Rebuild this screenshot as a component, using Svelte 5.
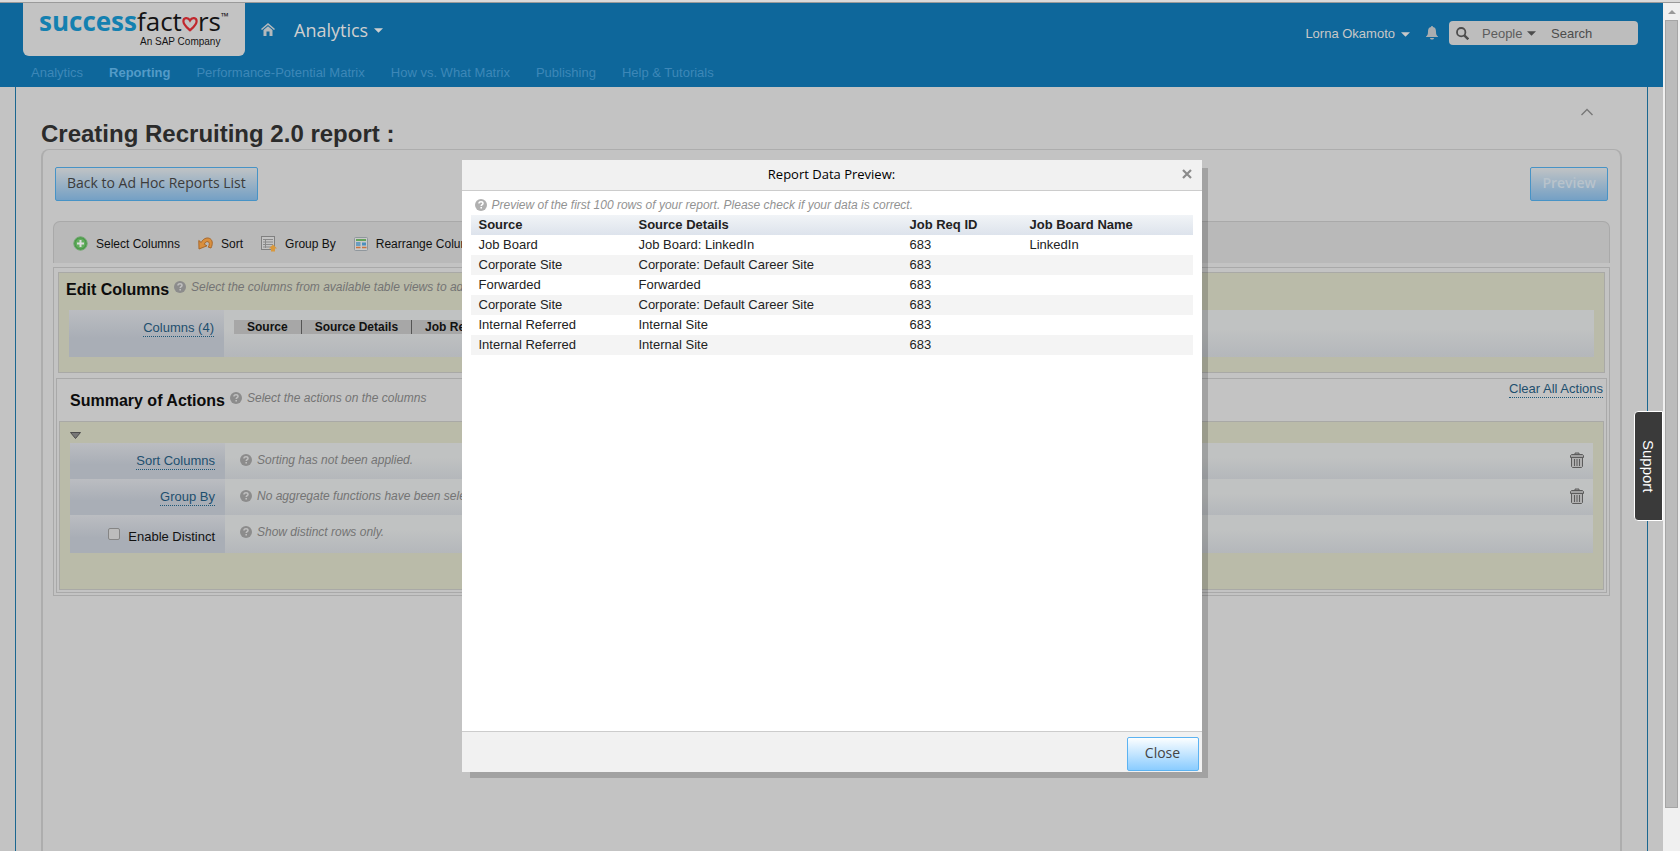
<script lang="ts">
  type Row = { source: string; details: string; req: string; board: string };

  const navItems = [
    'Analytics',
    'Reporting',
    'Performance-Potential Matrix',
    'How vs. What Matrix',
    'Publishing',
    'Help & Tutorials',
  ];
  const activeNav = 'Reporting';

  const columns = ['Source', 'Source Details', 'Job Req ID', 'Job Board Name'];

  const rows: Row[] = [
    { source: 'Job Board', details: 'Job Board: LinkedIn', req: '683', board: 'LinkedIn' },
    { source: 'Corporate Site', details: 'Corporate: Default Career Site', req: '683', board: '' },
    { source: 'Forwarded', details: 'Forwarded', req: '683', board: '' },
    { source: 'Corporate Site', details: 'Corporate: Default Career Site', req: '683', board: '' },
    { source: 'Internal Referred', details: 'Internal Site', req: '683', board: '' },
    { source: 'Internal Referred', details: 'Internal Site', req: '683', board: '' },
  ];

  let distinct = $state(false);
  let previewOpen = $state(true);
  let query = $state('');
</script>

{#snippet hint(text: string)}
  <span class="hint">
    <svg width="12" height="12" viewBox="0 0 12 12" aria-hidden="true">
      <circle cx="6" cy="6" r="6" fill="currentColor" />
      <path d="M4 4.6C4 3.3 4.9 2.7 6 2.7s2 .7 2 1.7c0 1.3-1.8 1.3-1.8 2.7" fill="none" stroke="var(--mark)" stroke-width="1.5" />
      <rect x="5.4" y="8" width="1.6" height="1.5" fill="var(--mark)" />
    </svg>
    <em>{text}</em>
  </span>
{/snippet}

{#snippet caret()}
  <svg class="caret" width="9" height="5" viewBox="0 0 10 5" aria-hidden="true">
    <path d="M0 0h10L5 5z" fill="currentColor" />
  </svg>
{/snippet}

{#snippet trash()}
  <button class="icon-btn" aria-label="Delete">
    <svg width="14" height="16" viewBox="0 0 14 16" fill="none" stroke="#5c5c5c">
      <path d="M5 2.5V1h4v1.5M.5 5.5v-2l1-1h11l1 1v2z" fill="#a2a2a2" />
      <path d="M1.500 6v8.500l1 1h9l1-1V6" fill="#b0b0b0" />
      <path d="M4.500 7v7M7 7v7M9.500 7v7" />
    </svg>
  </button>
{/snippet}

<div class="window">
  <div class="page">
    <header>
      <div class="top-row">
        <a class="logo" href="#home" aria-label="SuccessFactors">
          <span class="logo-word">
            <b>success</b><span>fact</span><svg width="16" height="16" viewBox="0 0 16 16" aria-hidden="true">
              <path
                d="M8 14.3C5 11.500 1.400 8.800 1.400 5.200 1.400 1.600 6 .8 8 4.500c2-3.700 6.600-2.900 6.600.7 0 3.600-3.600 6.300-6.600 9.100z"
                fill="none"
                stroke="#c1272d"
                stroke-width="2.2"
              />
            </svg><span>rs</span><sup>™</sup>
          </span>
          <span class="logo-tag">An SAP Company</span>
        </a>
        <a class="home" href="#home" aria-label="Home">
          <svg width="14" height="13" viewBox="0 0 14 13">
            <path d="M7 0l7 6-1 1-6-5-6 5-1-1z" fill="#b4b9bc" />
            <path d="M2.500 7L7 3.300 11.500 7v6H8.500V8.500h-3V13h-3z" fill="#b4b9bc" />
          </svg>
        </a>
        <button class="module">Analytics {@render caret()}</button>

        <div class="user-area">
          <button class="user">Lorna Okamoto {@render caret()}</button>
          <button class="icon-btn" aria-label="Notifications">
            <svg width="12" height="14" viewBox="0 0 12 14" fill="#a9adb0">
              <path d="M6 0c.7 0 1 .5 1 1 2.300.5 3 2.300 3 4.500 0 3 .6 3.800 2 5V11H0v-.5c1.400-1.200 2-2 2-5C2 3.300 2.700 1.500 5 1c0-.5.3-1 1-1zM4 12h4c0 2-4 2-4 0z" />
            </svg>
          </button>
          <form class="search" onsubmit={(e) => e.preventDefault()}>
            <svg width="13" height="13" viewBox="0 0 13 13" fill="none" stroke="#4c4c4c" aria-hidden="true">
              <circle cx="5.200" cy="5.200" r="4.200" stroke-width="1.800" />
              <path d="M8.300 8.300l4 4" stroke-width="2.400" />
            </svg>
            <span class="scope">
              <select aria-label="Search scope">
                <option>People</option>
              </select>
              {@render caret()}
            </span>
            <input type="text" placeholder="Search" aria-label="Search" bind:value={query} />
          </form>
        </div>
      </div>
      <nav>
        {#each navItems as item}
          <a href="#nav" class:active={item === activeNav}>{item}</a>
        {/each}
      </nav>
    </header>

    <main>
      <div class="collapse-row">
        <button class="icon-btn" aria-label="Collapse">
          <svg width="12" height="8" viewBox="0 0 12 8" fill="none" stroke="#777">
            <path d="M.5 7L6 1.500 11.500 7" stroke-width="1.400" />
          </svg>
        </button>
      </div>
      <h1>Creating Recruiting 2.0 report :</h1>

      <div class="panel">
        <div class="actions">
          <button class="btn">Back to Ad Hoc Reports List</button>
          <button class="btn btn-preview" onclick={() => (previewOpen = true)}>Preview</button>
        </div>

        <div class="toolbar">
          <button>
            <svg width="15" height="15" viewBox="0 0 15 15" aria-hidden="true">
              <circle cx="7.500" cy="7.500" r="6.700" fill="#4a9a48" stroke="#74a872" />
              <circle cx="7.500" cy="7.500" r="5" fill="#62ad5e" />
              <path d="M7.500 4v7M4 7.500h7" stroke="#dcdcdc" stroke-width="2" />
            </svg>
            Select Columns
          </button>
          <button>
            <svg width="15" height="13" viewBox="0 0 15 13" aria-hidden="true">
              <path
                d="M.8 3.500l2.400 2C5 1.800 8.500.3 11.300 1.300c3.200 1.200 3.900 5.200 1.700 9.700l-2.700-.8c1.500-2.700 1.300-5-.3-5.500-1.600-.5-3 .6-3.700 2.600l2.700 1.500L1 12z"
                fill="#d98f3e"
                stroke="#a8672a"
              />
            </svg>
            Sort
          </button>
          <button>
            <svg width="16" height="16" viewBox="0 0 16 16" aria-hidden="true">
              <rect x=".5" y=".5" width="13" height="13" fill="#c4c4c4" stroke="#808080" />
              <path d="M2 3.500h10M2 6h10M2 8.500h10M2 11h10M4.500 3v9" stroke="#8a8a8a" />
              <path d="M12 8.500l4 4h-2V15.500h-4v-3H8z" fill="#d9983c" />
            </svg>
            Group By
          </button>
          <button>
            <svg width="14" height="14" viewBox="0 0 14 14" aria-hidden="true">
              <rect x=".5" y=".5" width="13" height="13" rx="1" fill="#cacaca" stroke="#8f979d" />
              <rect x="2" y="2" width="10" height="2" fill="#66a35c" />
              <path d="M2 6h4.500M2 8h4.500" stroke="#4b8fbd" stroke-width="1.300" />
              <path d="M2 10.500h4.500M8 10.500h4.500" stroke="#c9733f" stroke-width="1.300" />
              <rect x="8" y="5.500" width="4" height="3" fill="#4b8fbd" />
            </svg>
            Rearrange Columns
          </button>
        </div>

        <div class="builder">
          <section class="edit tinted">
            <div class="section-head">
              <h2>Edit Columns</h2>
              {@render hint('Select the columns from available table views to add to the report.')}
            </div>
            <div class="field columns-field">
              <div class="label"><a href="#columns">Columns (4)</a></div>
              <div class="value">
                <ul class="chips">
                  {#each columns as column}
                    <li>{column}</li>
                  {/each}
                </ul>
              </div>
            </div>
          </section>

          <section class="summary">
            <div class="section-head">
              <h2>Summary of Actions</h2>
              {@render hint('Select the actions on the columns')}
              <a class="clear" href="#clear">Clear All Actions</a>
            </div>
            <div class="summary-body tinted">
              <button class="icon-btn toggle" aria-label="Toggle actions">
                <svg width="11" height="7" viewBox="0 0 11 7">
                  <path d="M.5.5h10l-5 6z" fill="#777" stroke="#4c4c4c" />
                </svg>
              </button>
              <div class="field">
                <div class="label"><a href="#sort">Sort Columns</a></div>
                <div class="value">{@render hint('Sorting has not been applied.')}{@render trash()}</div>
              </div>
              <div class="field">
                <div class="label"><a href="#group">Group By</a></div>
                <div class="value">{@render hint('No aggregate functions have been selected.')}{@render trash()}</div>
              </div>
              <div class="field">
                <div class="label">
                  <input id="distinct" type="checkbox" bind:checked={distinct} />
                  <label for="distinct">Enable Distinct</label>
                </div>
                <div class="value">{@render hint('Show distinct rows only.')}</div>
              </div>
            </div>
          </section>
        </div>
      </div>
    </main>

    <button class="support">Support</button>

    {#if previewOpen}
      <div class="backdrop">
        <div class="modal" role="dialog" aria-modal="true" aria-labelledby="preview-title">
          <div class="modal-head">
            <h3 id="preview-title">Report Data Preview:</h3>
            <button class="icon-btn close-x" aria-label="Close preview" onclick={() => (previewOpen = false)}>
              <svg width="10" height="10" viewBox="0 0 10 10" stroke="#8b8b8b" stroke-width="2.2">
                <path d="M1 1l8 8M9 1L1 9" />
              </svg>
            </button>
          </div>
          <div class="modal-body">
            {@render hint('Preview of the first 100 rows of your report. Please check if your data is correct.')}
            <table>
              <thead>
                <tr>
                  {#each columns as column}
                    <th scope="col">{column}</th>
                  {/each}
                </tr>
              </thead>
              <tbody>
                {#each rows as row}
                  <tr>
                    <td>{row.source}</td>
                    <td>{row.details}</td>
                    <td>{row.req}</td>
                    <td>{row.board}</td>
                  </tr>
                {/each}
              </tbody>
            </table>
          </div>
          <div class="modal-foot">
            <button class="btn btn-close" onclick={() => (previewOpen = false)}>Close</button>
          </div>
        </div>
      </div>
    {/if}
  </div>

  <div class="scrollbar" aria-hidden="true">
    <svg width="8" height="4" viewBox="0 0 8 4"><path d="M4 0l4 4H0z" fill="#999" /></svg>
    <div class="thumb"></div>
  </div>
</div>

<style>
  :global(body) {
    margin: 0;
    background: #c3c3c3;
    font-family: 'Liberation Sans', Arial, sans-serif;
    font-size: 13px;
    color: #111;
  }

  * {
    box-sizing: border-box;
  }

  button,
  input,
  select {
    font: inherit;
    color: inherit;
    margin: 0;
  }

  button {
    border: 0;
    background: none;
    padding: 0;
    cursor: pointer;
  }

  svg {
    display: block;
    flex-shrink: 0;
  }

  .window {
    --mark: #c0c0c0;
    display: flex;
    height: 100vh;
    padding-top: 3px;
    background: linear-gradient(#dadada 2px, #9a9a9a 2px, #9a9a9a 3px, #c3c3c3 3px);
  }

  .page {
    position: relative;
    flex: 1;
    min-width: 0;
    display: flex;
    flex-direction: column;
    overflow: hidden;
  }

  header {
    background: #0e679b;
  }

  .top-row {
    display: flex;
    align-items: center;
    height: 53px;
    padding: 0 25px 0 23px;
  }

  .logo {
    display: flex;
    flex-direction: column;
    width: 222px;
    height: 53px;
    padding: 3px 16px 0;
    border-radius: 0 0 6px 6px;
    background: #c3c3c3;
    color: #141414;
    text-decoration: none;
  }

  .logo-word {
    display: flex;
    align-items: center;
    height: 30px;
    font: 500 26px/30px 'Open Sans', sans-serif;
  }

  .logo-word b {
    font-weight: 700;
    color: #1480b0;
  }

  .logo-word svg {
    margin-top: 6px;
  }

  .logo-word sup {
    align-self: flex-start;
    font-size: 10px;
    line-height: 20px;
  }

  .logo-tag {
    margin-left: 101px;
    font-size: 10px;
    line-height: 12px;
    white-space: nowrap;
  }

  .home {
    margin-left: 16px;
  }

  .module {
    display: flex;
    align-items: center;
    gap: 6px;
    margin-left: 19px;
    font: 18px/24px 'Open Sans', sans-serif;
    color: #cfcfcf;
  }

  .module .caret {
    margin-top: 2px;
  }

  .user-area {
    display: flex;
    align-items: center;
    gap: 16px;
    margin-left: auto;
    padding-top: 7px;
  }

  .user {
    display: flex;
    align-items: center;
    gap: 6px;
    color: #c8c8c8;
  }

  .user .caret {
    margin-top: 2px;
  }

  .search {
    display: flex;
    align-items: center;
    width: 189px;
    height: 24px;
    margin-left: -5px;
    padding: 0 7px;
    border-radius: 4px;
    background: #bdbdbd;
    color: #4c4c4c;
  }

  .scope {
    display: flex;
    align-items: center;
    margin-left: 13px;
  }

  .scope select {
    appearance: none;
    width: 45px;
    padding: 0;
    border: 0;
    background: none;
    color: #5c5c5c;
  }

  .search input {
    flex: 1;
    min-width: 0;
    margin-left: 15px;
    padding: 0;
    border: 0;
    outline: 0;
    background: none;
  }

  .search input::placeholder {
    color: #4c4c4c;
    opacity: 1;
  }

  nav {
    display: flex;
    gap: 26px;
    height: 31px;
    padding: 9px 31px 0;
    line-height: 16px;
  }

  nav a {
    color: #3d87b8;
    text-decoration: none;
  }

  nav .active {
    color: #539bc8;
    font-weight: 700;
  }

  main {
    flex: 1;
    min-height: 0;
    display: flex;
    flex-direction: column;
    margin: 0 15px;
    padding: 0 25px;
    border: solid #1b6790;
    border-width: 0 1px;
  }

  .collapse-row {
    display: flex;
    justify-content: flex-end;
    align-items: flex-end;
    height: 33px;
    padding: 0 29px 4px;
  }

  h1 {
    margin: 0 0 1px;
    font-size: 24px;
    line-height: 28px;
    color: #2b2b2b;
  }

  .panel {
    flex: 1;
    min-height: 0;
    padding: 17px 10px 0;
    border: solid #adadad;
    border-width: 1px 2px 0;
    border-radius: 8px 8px 0 0;
  }

  .actions {
    display: flex;
    justify-content: space-between;
    padding: 0 2px;
  }

  .btn {
    height: 34px;
    padding: 0 11px 2px;
    border: 1px solid #4793c6;
    border-radius: 2px;
    background: linear-gradient(#c0c3c5, #74a0c5);
    font: 14px/20px 'Open Sans', sans-serif;
    color: #3c3c3c;
  }

  .btn-preview {
    font-weight: 600;
    color: #b8c3cc;
  }

  .btn-close {
    width: 72px;
    border-color: #5cb3f2;
    background: linear-gradient(#fcfeff, #8accff);
    color: #444;
  }

  .toolbar {
    display: flex;
    gap: 18px;
    height: 42px;
    margin-top: 20px;
    padding: 2px 19px 0;
    border: solid #a9a9a9;
    border-width: 1px 1px 0;
    border-radius: 7px 7px 0 0;
    background: #b9b9b9;
    font-size: 12px;
  }

  .toolbar button {
    display: flex;
    align-items: center;
    gap: 8px;
    white-space: nowrap;
  }

  .builder {
    margin-top: 4px;
    padding: 4px 2px 2px;
    border: 1px solid #a9a9a9;
  }

  .tinted {
    border: 1px solid #a9a9a6;
    background: #babba9;
  }

  .edit {
    margin: 0 2px;
    padding: 0 10px 15px;
  }

  .section-head {
    display: flex;
    align-items: flex-start;
    gap: 5px;
  }

  h2 {
    margin: 0;
    font-size: 16px;
    line-height: 22px;
    color: #0c0c0c;
  }

  .edit .section-head {
    height: 37px;
    margin-left: -3px;
    padding-top: 6px;
  }

  .hint {
    display: inline-flex;
    align-items: center;
    gap: 5px;
    font-size: 12px;
    line-height: 16px;
    color: #8c8c8c;
    white-space: nowrap;
  }

  .hint em {
    color: #747474;
  }

  .field {
    display: grid;
    grid-template-columns: 155px 1fr;
    min-height: 36px;
  }

  .label {
    display: flex;
    align-items: center;
    justify-content: flex-end;
    padding-right: 10px;
    background: linear-gradient(#bbbdc1, #a9aeb6 60%);
  }

  .value {
    display: flex;
    align-items: center;
    justify-content: space-between;
    padding: 0 9px 0 15px;
    background: linear-gradient(#c0c2c2 40%, #b4b7bb);
  }

  .label a,
  .clear {
    border-bottom: 1px dotted #1e5878;
    line-height: 16px;
    color: #1e4f6e;
    text-decoration: none;
  }

  .columns-field {
    height: 47px;
  }

  .columns-field .label,
  .columns-field .value {
    align-items: flex-start;
    padding-top: 10px;
  }

  .columns-field .value {
    padding-left: 10px;
  }

  .chips {
    display: flex;
    margin: 0;
    padding: 0;
    list-style: none;
    background: #a7a7a7;
    font-size: 12px;
    font-weight: 700;
    line-height: 14px;
  }

  .chips li {
    padding: 0 13px;
    border-right: 1px solid #555;
  }

  .chips li:last-child {
    border: 0;
  }

  .summary {
    margin-top: 5px;
    padding: 0 2px 2px;
    border: 1px solid #a9a9a9;
  }

  .summary .section-head {
    height: 42px;
    padding: 11px 1px 0 11px;
  }

  .clear {
    margin: -9px 0 0 auto;
  }

  .summary-body {
    padding: 0 10px 36px;
  }

  .toggle {
    display: flex;
    align-items: center;
    height: 21px;
    padding-top: 6px;
  }

  .summary-body .field:last-child {
    min-height: 38px;
  }

  .summary-body .field:last-child .label {
    padding-top: 4px;
  }

  .summary-body .value {
    padding-bottom: 2px;
  }

  .summary-body .field:last-child .value {
    padding-bottom: 4px;
  }

  .label input {
    appearance: none;
    width: 12px;
    height: 12px;
    margin: 0 8px 4px 0;
    border: 1px solid #858585;
    border-radius: 2px;
    background: #bcbcbc;
  }

  .label input:checked {
    background: #555;
  }

  .support {
    position: absolute;
    top: 408px;
    right: 0;
    width: 29px;
    height: 110px;
    border: 1px solid #fff;
    border-radius: 4px 0 0 4px;
    background: #3a3a3a;
    color: #fff;
    font-size: 15px;
    writing-mode: vertical-rl;
  }

  .backdrop {
    position: absolute;
    inset: 0;
    display: flex;
    justify-content: center;
    align-items: flex-start;
    padding-top: 157px;
    pointer-events: none;
  }

  .modal {
    --mark: #fff;
    display: flex;
    flex-direction: column;
    width: 740px;
    height: 612px;
    background: #fff;
    box-shadow: 7px 7px 0 -1px rgba(0, 0, 0, 0.17);
    pointer-events: auto;
  }

  .modal-head {
    display: grid;
    grid-template-columns: 1fr auto 1fr;
    align-items: center;
    height: 31px;
    padding: 0 10px 2px;
    border-bottom: 1px solid #ccc;
    background: #f1f1f1;
  }

  h3 {
    grid-column: 2;
    margin: 0;
    font: 500 13px/20px 'Open Sans', sans-serif;
    color: #000;
  }

  .close-x {
    justify-self: end;
  }

  .modal-body {
    flex: 1;
    padding: 6px 9px 0;
  }

  .modal-body .hint {
    display: flex;
    height: 18px;
    padding: 0 4px 2px;
    color: #b0b0b0;
  }

  .modal-body .hint em {
    color: #929292;
  }

  table {
    width: 100%;
    border-collapse: collapse;
    table-layout: fixed;
    color: #222;
  }

  th,
  td {
    height: 20px;
    padding: 0 8px;
    line-height: 16px;
    text-align: left;
  }

  th:nth-child(1) {
    width: 160px;
  }

  th:nth-child(2) {
    width: 271px;
  }

  th:nth-child(3) {
    width: 120px;
  }

  thead tr {
    background: linear-gradient(#f1f4f7, #dde3ec);
  }

  tbody tr:nth-child(even) {
    background: #f4f4f4;
  }

  .modal-foot {
    display: flex;
    justify-content: flex-end;
    height: 41px;
    padding: 5px 3px 0;
    border-top: 1px solid #ccc;
    background: #f1f1f1;
  }

  .scrollbar {
    display: flex;
    flex-direction: column;
    align-items: center;
    gap: 6px;
    width: 17px;
    padding: 7px 2px 43px;
    background: #f0f0f0;
  }

  .thumb {
    flex: 1;
    width: 13px;
    border: 1px solid #a5a5a5;
    background: #bbb;
  }
</style>
